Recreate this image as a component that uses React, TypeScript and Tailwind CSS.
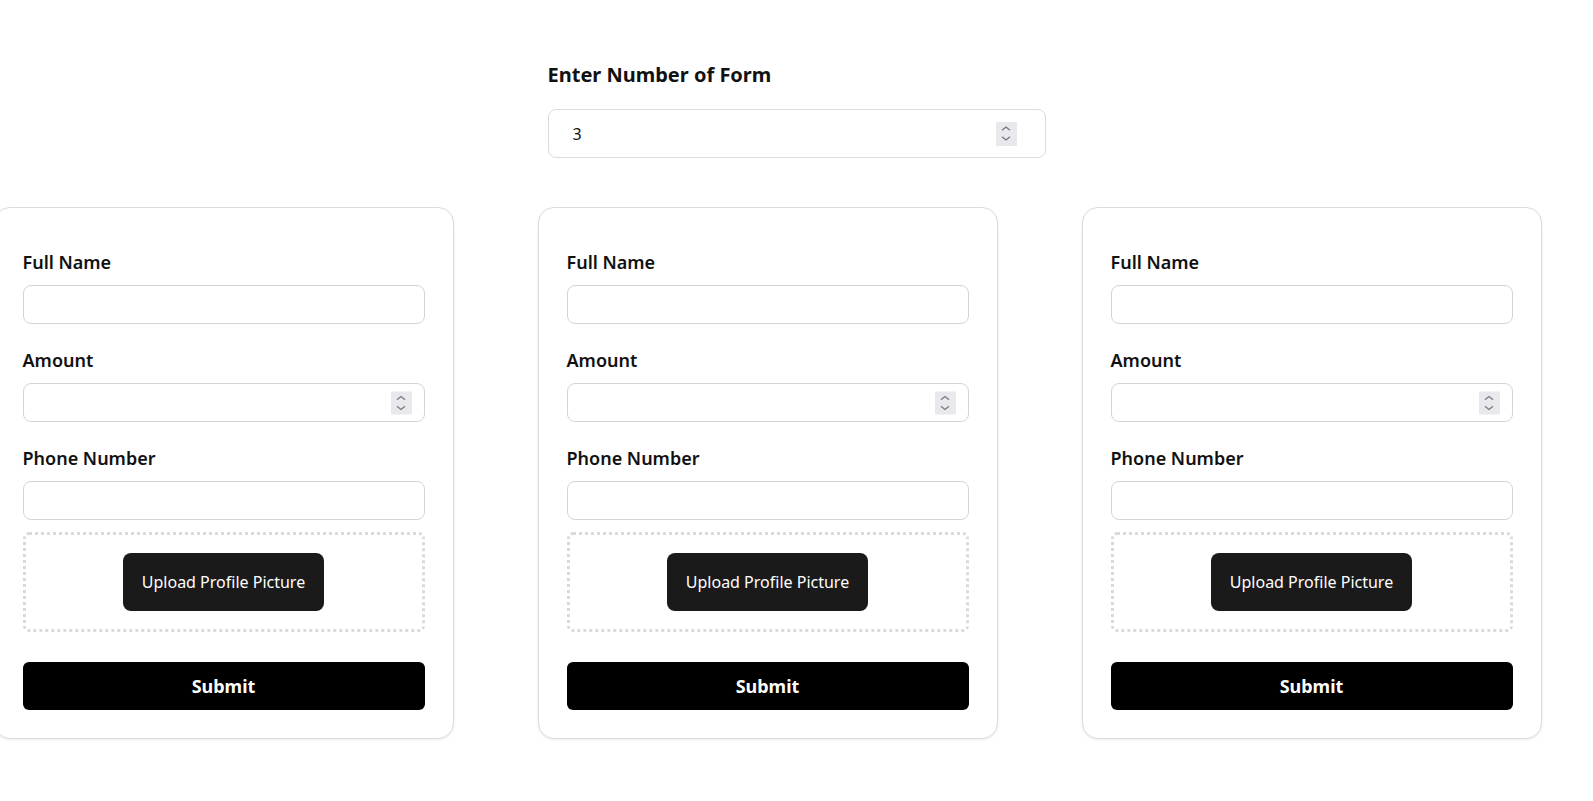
import { useState } from 'react';

const FONT = "font-['Noto_Sans','Open_Sans',sans-serif]";

// the headless page never hovers, so the number spinner is drawn by hand
function Spinner({ className }: { className: string }) {
  return (
    <span
      className={`pointer-events-none absolute top-1/2 flex -translate-y-1/2 flex-col items-center justify-center gap-[5px] bg-[#e9e9ed] ${className}`}
    >
      <svg width="10" height="5" viewBox="0 0 10 5" fill="none">
        <path d="M1 4.3 5 1 9 4.3" stroke="#75757f" strokeWidth="1.2" />
      </svg>
      <svg width="10" height="5" viewBox="0 0 10 5" fill="none">
        <path d="M1 0.7 5 4 9 0.7" stroke="#75757f" strokeWidth="1.2" />
      </svg>
    </span>
  );
}

const numberInput =
  '[appearance:textfield] [&::-webkit-inner-spin-button]:appearance-none [&::-webkit-outer-spin-button]:appearance-none';

function ProfileForm() {
  const [name, setName] = useState('');
  const [amount, setAmount] = useState('');
  const [phone, setPhone] = useState('');

  return (
    <form
      className="w-[460px] shrink-0 rounded-[16px] border border-[#dcdce0] bg-white p-[28px] shadow-[0_1px_3px_rgba(0,0,0,0.08)]"
      onSubmit={(e) => e.preventDefault()}
    >
      <div className="flex flex-col pt-[12px]">
        <label className="text-[18px] leading-[28px] font-semibold text-[#111]">Full Name</label>
        <input
          type="text"
          value={name}
          onChange={(e) => setName(e.target.value)}
          className="mt-[9px] h-[39px] w-full rounded-[8px] border border-[#d4d4d8] px-3 outline-none"
        />
        <label className="mt-[22px] text-[18px] leading-[28px] font-semibold text-[#111]">Amount</label>
        <div className="relative mt-[9px]">
          <input
            type="number"
            value={amount}
            onChange={(e) => setAmount(e.target.value)}
            className={`h-[39px] w-full rounded-[8px] border border-[#d4d4d8] pr-[40px] pl-3 outline-none ${numberInput}`}
          />
          <Spinner className="right-[13px] h-[23px] w-[21px]" />
        </div>
        <label className="mt-[22px] text-[18px] leading-[28px] font-semibold text-[#111]">Phone Number</label>
        <input
          type="text"
          value={phone}
          onChange={(e) => setPhone(e.target.value)}
          className="mt-[9px] h-[39px] w-full rounded-[8px] border border-[#d4d4d8] px-3 outline-none"
        />
      </div>
      <div className="mt-[12px] flex h-[100px] items-center justify-center rounded-[6px] border-[3px] border-dotted border-[#dadade]">
        <button
          type="button"
          className="h-[58px] rounded-[8px] bg-[#1a1a1a] px-[19px] text-[16px] text-white"
        >
          Upload Profile Picture
        </button>
      </div>
      <button
        type="submit"
        className="mt-[30px] h-[48px] w-full rounded-[6px] bg-black text-[18px] font-bold text-white"
      >
        Submit
      </button>
    </form>
  );
}

export default function App() {
  const [count, setCount] = useState('3');
  const n = Math.max(0, Math.min(10, parseInt(count) || 0));

  return (
    <div className={`min-h-screen overflow-hidden bg-white ${FONT} text-[#111]`}>
      <div className="flex flex-col items-center pt-[61px]">
        <div className="w-[498px]">
          <h1 className="text-[20px] leading-[28px] font-bold">Enter Number of Form</h1>
          <div className="relative mt-[20px]">
            <input
              type="number"
              value={count}
              onChange={(e) => setCount(e.target.value)}
              className={`h-[49px] w-full rounded-[8px] border border-[#dcdce0] pr-[56px] pl-[24px] text-[16px] outline-none ${numberInput}`}
            />
            <Spinner className="right-[29px] h-[24px] w-[21px]" />
          </div>
        </div>
      </div>
      <div className="mt-[49px] flex justify-center gap-[84px] pr-[58px] pb-10">
        {Array.from({ length: n }).map((_, i) => (
          <ProfileForm key={i} />
        ))}
      </div>
    </div>
  );
}
